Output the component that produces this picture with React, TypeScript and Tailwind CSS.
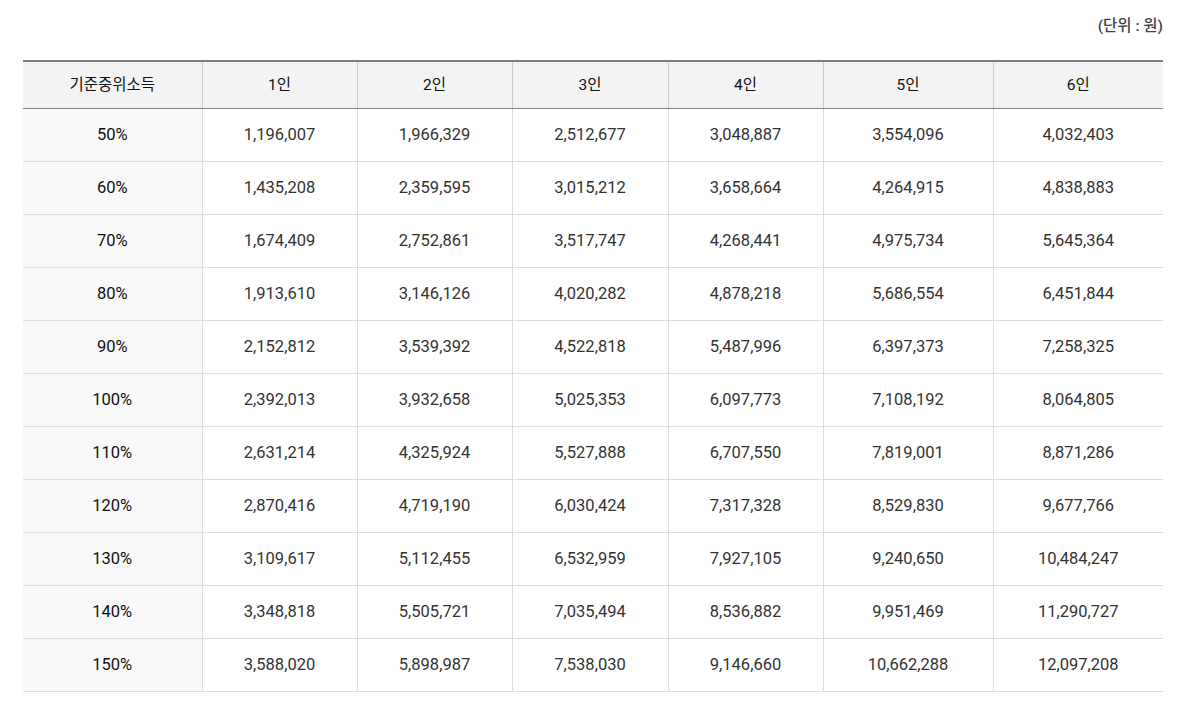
import React from "react";

const headers = ["기준중위소득", "1인", "2인", "3인", "4인", "5인", "6인"];

const rows: string[][] = [
  ["50%", "1,196,007", "1,966,329", "2,512,677", "3,048,887", "3,554,096", "4,032,403"],
  ["60%", "1,435,208", "2,359,595", "3,015,212", "3,658,664", "4,264,915", "4,838,883"],
  ["70%", "1,674,409", "2,752,861", "3,517,747", "4,268,441", "4,975,734", "5,645,364"],
  ["80%", "1,913,610", "3,146,126", "4,020,282", "4,878,218", "5,686,554", "6,451,844"],
  ["90%", "2,152,812", "3,539,392", "4,522,818", "5,487,996", "6,397,373", "7,258,325"],
  ["100%", "2,392,013", "3,932,658", "5,025,353", "6,097,773", "7,108,192", "8,064,805"],
  ["110%", "2,631,214", "4,325,924", "5,527,888", "6,707,550", "7,819,001", "8,871,286"],
  ["120%", "2,870,416", "4,719,190", "6,030,424", "7,317,328", "8,529,830", "9,677,766"],
  ["130%", "3,109,617", "5,112,455", "6,532,959", "7,927,105", "9,240,650", "10,484,247"],
  ["140%", "3,348,818", "5,505,721", "7,035,494", "8,536,882", "9,951,469", "11,290,727"],
  ["150%", "3,588,020", "5,898,987", "7,538,030", "9,146,660", "10,662,288", "12,097,208"],
];

const colWidths = ["w-[179px]", "w-[155px]", "w-[155px]", "w-[156px]", "w-[155px]", "w-[170px]", "w-[170px]"];

const App: React.FC = () => {
  return (
    <div className="min-h-screen bg-white px-[23px] pt-[15px] font-['Roboto','Noto_Sans_CJK_KR',sans-serif]">
      <p className="text-right text-[15.5px] font-medium leading-[22px] text-[#444]">(단위 : 원)</p>
      <table className="mt-[23px] w-[1140px] table-fixed border-collapse border-t-2 border-t-[#7f7f7f]">
        <colgroup>
          {colWidths.map((w, i) => (
            <col key={i} className={w} />
          ))}
        </colgroup>
        <thead>
          <tr className="h-[47px] bg-[#f3f3f3]">
            {headers.map((h, i) => (
              <th
                key={h}
                className={`border-b border-b-[#838383] pt-px text-center text-[15.5px] font-normal text-[#111] ${
                  i > 0 ? "border-l border-l-[#cccccc]" : ""
                }`}
              >
                {h}
              </th>
            ))}
          </tr>
        </thead>
        <tbody>
          {rows.map((row) => (
            <tr key={row[0]} className="h-[53px]">
              {row.map((cell, i) => (
                <td
                  key={i}
                  className={`border-b border-b-[#dddddd] pt-px text-center text-[16.5px] ${
                    i === 0 ? "bg-[#f9f9f9] text-[#111]" : "border-l border-l-[#dddddd] text-[#333]"
                  }`}
                >
                  {cell}
                </td>
              ))}
            </tr>
          ))}
        </tbody>
      </table>
    </div>
  );
};

export default App;
